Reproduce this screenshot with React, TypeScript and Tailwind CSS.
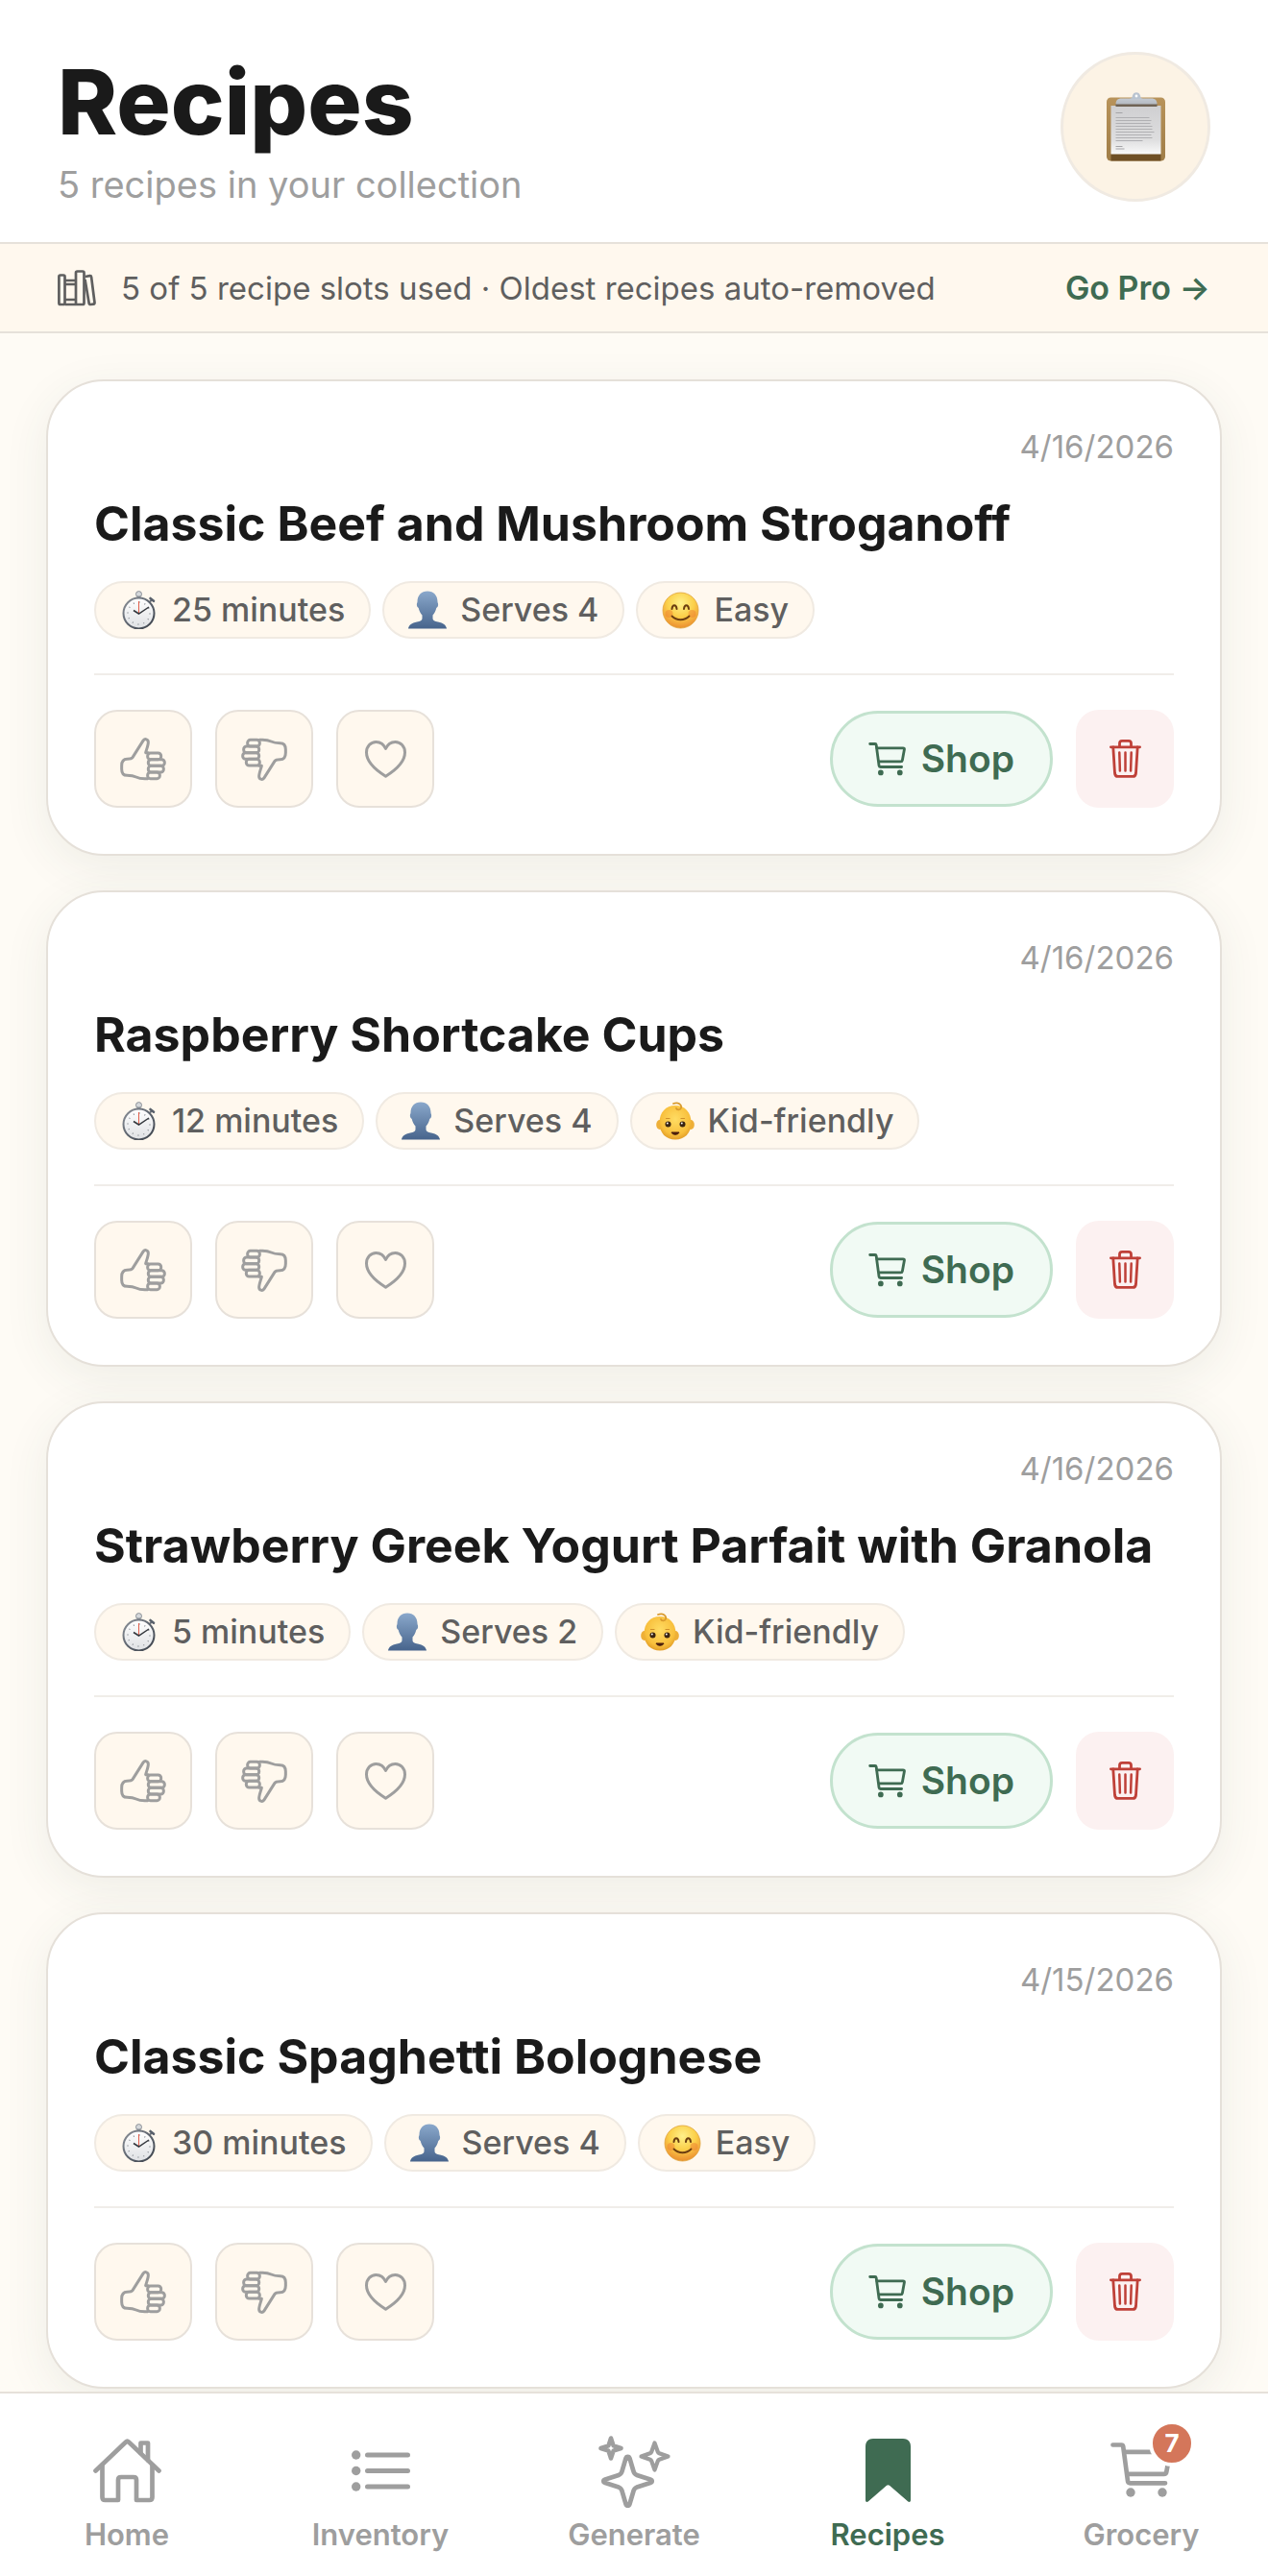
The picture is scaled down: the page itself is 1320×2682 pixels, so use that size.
import type { ReactNode } from 'react'

type Tag = { icon: 'timer' | 'person' | 'smile' | 'baby'; label: string }
type Recipe = { title: string; date: string; tags: Tag[] }

const RECIPES: Recipe[] = [
  {
    title: 'Classic Beef and Mushroom Stroganoff',
    date: '4/16/2026',
    tags: [
      { icon: 'timer', label: '25 minutes' },
      { icon: 'person', label: 'Serves 4' },
      { icon: 'smile', label: 'Easy' },
    ],
  },
  {
    title: 'Raspberry Shortcake Cups',
    date: '4/16/2026',
    tags: [
      { icon: 'timer', label: '12 minutes' },
      { icon: 'person', label: 'Serves 4' },
      { icon: 'baby', label: 'Kid-friendly' },
    ],
  },
  {
    title: 'Strawberry Greek Yogurt Parfait with Granola',
    date: '4/16/2026',
    tags: [
      { icon: 'timer', label: '5 minutes' },
      { icon: 'person', label: 'Serves 2' },
      { icon: 'baby', label: 'Kid-friendly' },
    ],
  },
  {
    title: 'Classic Spaghetti Bolognese',
    date: '4/15/2026',
    tags: [
      { icon: 'timer', label: '30 minutes' },
      { icon: 'person', label: 'Serves 4' },
      { icon: 'smile', label: 'Easy' },
    ],
  },
]

/* Gradients shared by the emoji drawings */
function EmojiDefs() {
  return (
    <svg className="absolute h-0 w-0" aria-hidden="true">
      <defs>
        <linearGradient id="steel" x1="0" y1="0" x2="1" y2="1">
          <stop offset="0" stopColor="#8d9299" />
          <stop offset="0.5" stopColor="#5d646e" />
          <stop offset="1" stopColor="#3c424b" />
        </linearGradient>
        <linearGradient id="dial" x1="0" y1="0" x2="0" y2="1">
          <stop offset="0" stopColor="#ffffff" />
          <stop offset="1" stopColor="#dfe1e4" />
        </linearGradient>
        <linearGradient id="bust" x1="0" y1="0" x2="0" y2="1">
          <stop offset="0" stopColor="#8aa8cb" />
          <stop offset="1" stopColor="#47648c" />
        </linearGradient>
        <radialGradient id="face" cx="0.5" cy="0.3" r="0.75">
          <stop offset="0" stopColor="#fff08a" />
          <stop offset="0.5" stopColor="#fbd04a" />
          <stop offset="0.85" stopColor="#ef9a35" />
          <stop offset="1" stopColor="#dd8a2a" />
        </radialGradient>
        <radialGradient id="babyface" cx="0.5" cy="0.4" r="0.65">
          <stop offset="0" stopColor="#ffdc63" />
          <stop offset="0.7" stopColor="#f8bf3c" />
          <stop offset="1" stopColor="#dc9422" />
        </radialGradient>
        <linearGradient id="board" x1="0" y1="0" x2="0" y2="1">
          <stop offset="0" stopColor="#b8935a" />
          <stop offset="1" stopColor="#a07d47" />
        </linearGradient>
        <linearGradient id="sheet" x1="0" y1="0" x2="0" y2="1">
          <stop offset="0" stopColor="#cfcfd1" />
          <stop offset="0.7" stopColor="#dededf" />
          <stop offset="1" stopColor="#fafafa" />
        </linearGradient>
        <linearGradient id="clip" x1="0" y1="0" x2="0" y2="1">
          <stop offset="0" stopColor="#c3cad3" />
          <stop offset="1" stopColor="#b4b9c0" />
        </linearGradient>
      </defs>
    </svg>
  )
}

function TimerEmoji() {
  return (
    <svg viewBox="0 0 40 40" className="size-10" aria-hidden="true">
      <circle cx="19.5" cy="3.6" r="3" fill="#d5d8db" stroke="#8a8f96" strokeWidth="1" />
      <rect x="17.6" y="5.5" width="3.8" height="4" fill="#8a8f96" />
      <path d="M31 11.500l2.500-2.500" stroke="#6a7079" strokeWidth="2" />
      <path d="M31.500 8l3.500 2.800" stroke="#59606b" strokeWidth="2.600" strokeLinecap="round" />
      <circle cx="19.5" cy="23.5" r="16" fill="url(#dial)" stroke="url(#steel)" strokeWidth="2" />
      <circle cx="19.500" cy="23.500" r="11.500" fill="none" stroke="#8b8f95" strokeWidth="1.400" strokeDasharray="1 5" />
      <path d="M19.500 24V11" stroke="#e2604d" strokeWidth="1" />
      <path d="M14 20.500l5.500 3.500 10.500-7" fill="none" stroke="#33373d" strokeWidth="1.500" />
    </svg>
  )
}

function PersonEmoji() {
  return (
    <svg viewBox="0 0 40 40" className="size-10" aria-hidden="true">
      <path
        d="M20 0.500c6.500 0 10.500 4.500 10.500 11 0 1 .8 1.500.6 3.500-.2 2-1.200 2.500-1.800 3-.8 3.500-2 5.500-3.800 7.500v3.500c0 2 2 2.800 5.500 3.600 5.500 1.200 8.200 3 9 7H0c.8-4 3.500-5.800 9-7 3.500-.8 5.500-1.600 5.500-3.600v-3.500c-1.800-2-3-4-3.800-7.500-.6-.5-1.600-1-1.800-3-.2-2 .6-2.500.6-3.500C9.500 5 13.500.5 20 .5z"
        fill="url(#bust)"
      />
    </svg>
  )
}

function SmileEmoji() {
  return (
    <svg viewBox="0 0 40 40" className="size-10" aria-hidden="true">
      <circle cx="19.500" cy="20.500" r="18.500" fill="url(#face)" stroke="#e0a33a" strokeWidth="0.800" />
      <circle cx="7.500" cy="24" r="4" fill="#ee7a2f" opacity="0.450" />
      <circle cx="31.500" cy="24" r="4" fill="#ee7a2f" opacity="0.450" />
      <path d="M10.500 19c.5-5 4.500-5 5 0M23 19c.5-5 4.500-5 5 0" fill="none" stroke="#6b3d10" strokeWidth="2" strokeLinecap="round" />
      <path d="M10.500 26.500c5 5 13 5 18 0" fill="none" stroke="#6b3d10" strokeWidth="1.800" strokeLinecap="round" />
    </svg>
  )
}

function BabyEmoji() {
  return (
    <svg viewBox="0 0 40 40" className="size-10" aria-hidden="true">
      <ellipse cx="3.800" cy="24" rx="3.600" ry="5" fill="#eeaf38" />
      <ellipse cx="36.200" cy="24" rx="3.600" ry="5" fill="#eeaf38" />
      <path d="M20 4C10 4 3.500 11 3.500 22c0 11 7 17.500 16.500 17.500S36.500 33 36.500 22C36.500 11 30 4 20 4z" fill="url(#babyface)" />
      <path d="M18 2c5-2 9 1 8 4.500-.8 2.500-4.500 2.500-5 .3" fill="none" stroke="#d99a2c" strokeWidth="1.800" strokeLinecap="round" />
      <circle cx="12.500" cy="23.500" r="3" fill="#3a2410" />
      <circle cx="27.500" cy="23.500" r="3" fill="#3a2410" />
      <circle cx="11.800" cy="22.500" r="0.900" fill="#fff" />
      <circle cx="26.800" cy="22.500" r="0.900" fill="#fff" />
      <path d="M10.500 17.500h3.500M26 17.500h3.500" stroke="#cf8f28" strokeWidth="1.200" strokeLinecap="round" />
      <path d="M16 32h8c-1 3-7 3-8 0z" fill="#4a1d0c" stroke="#4a1d0c" strokeWidth="1" strokeLinejoin="round" />
    </svg>
  )
}

const EMOJI: Record<Tag['icon'], () => ReactNode> = {
  timer: TimerEmoji,
  person: PersonEmoji,
  smile: SmileEmoji,
  baby: BabyEmoji,
}

function ClipboardEmoji() {
  return (
    <svg viewBox="0 0 61 72" className="h-[72px] w-[61px]" aria-hidden="true">
      <rect x="0" y="5.500" width="61" height="66" rx="4.500" fill="url(#board)" />
      <path d="M4.500 64h52v7.500h-52z" fill="#6f5026" />
      <path d="M4.500 14h52v50.500h-52z" fill="url(#sheet)" />
      <path d="M9.500 13.500h43" stroke="#6f6355" strokeWidth="3" />
      <path d="M9.500 12.500c0-4 2-6 6-6h31c4 0 6 2 6 6z" fill="url(#clip)" />
      <path d="M23 7c3 0 3.500-1.500 4-3.500.8-4.500 7.200-4.500 8 0C35.500 5.500 36 7 39 7z" fill="#b9c3d0" />
      <circle cx="31" cy="4" r="1.400" fill="#fff" />
      <path d="M9.500 21.500h7M9.500 59h9M9.500 56.500h7" stroke="#a4a4a7" strokeWidth="1" />
      <path
        d="M9.500 26.500h35M9.500 29.500h37M9.500 32.500h36M9.500 35.500h38M9.500 38.500h38M9.500 41.500h40M9.500 44.500h37M9.500 47.500h38M9.500 50.500h28"
        stroke="#b0b0b3"
        strokeWidth="1.200"
      />
    </svg>
  )
}

function BooksIcon() {
  return (
    <svg viewBox="0 0 40 38" className="h-[38px] w-10" fill="none" stroke="currentColor" strokeWidth="2.700" strokeLinejoin="round" aria-hidden="true">
      <rect x="1.400" y="5.500" width="6.100" height="30.500" rx="1.500" />
      <path d="M7.500 11h11.500M7.500 15h11.500M7.500 31h11.500M8 36h11" />
      <rect x="19" y="1.500" width="8.500" height="34.500" rx="1.500" />
      <path d="M28.800 7l4.700-.8c1-.1 1.500.3 1.600 1.200L38.500 34c.1.900-.3 1.500-1.200 1.600l-3 .4c-.9.1-1.500-.3-1.600-1.200L28.500 10" />
    </svg>
  )
}

function ThumbIcon({ down = false }: { down?: boolean }) {
  return (
    <svg
      viewBox="0 0 144 135"
      className={down ? 'h-[45px] w-12 rotate-180' : 'h-[45px] w-12'}
      fill="none"
      stroke="currentColor"
      strokeWidth="9"
      strokeLinejoin="round"
      strokeLinecap="round"
      aria-hidden="true"
    >
      <path d="M86 128c-14 1-26 0-36-5-8-4-18-5-28-5C10 118 5 110 5 98V88c0-15 5-21 17-21 11 0 14-1 17-5L73 8c5-6 15-3 15 6 0 10-6 24-8 33h8" />
      <rect x="86" y="48" width="42" height="20" rx="9" />
      <rect x="88" y="68" width="51" height="20" rx="9" />
      <rect x="88" y="88" width="48" height="20" rx="9" />
      <rect x="86" y="108" width="38" height="20" rx="9" />
    </svg>
  )
}

function HeartIcon() {
  return (
    <svg viewBox="0 0 43 39" className="h-[39px] w-[43px]" fill="none" stroke="currentColor" strokeWidth="3" strokeLinejoin="round" aria-hidden="true">
      <path d="M21.500 37.200C10 30 1.500 22 1.500 12.500 1.500 6 6 1.500 11.500 1.500c4.500 0 8 2.500 10 7 2-4.500 5.500-7 10-7 5.500 0 10 4.500 10 11C41.500 22 33 30 21.500 37.200z" />
    </svg>
  )
}

function CartIcon({ className }: { className: string }) {
  return (
    <svg viewBox="0 0 64 58" className={className} fill="none" stroke="currentColor" strokeWidth="4.700" strokeLinejoin="round" strokeLinecap="round" aria-hidden="true">
      <path d="M2.500 2.500h9c1 0 1.500.5 1.700 1.500L18 40c.2 1.500 1 2.300 2.500 2.300H57" />
      <path d="M14.500 9.800h45c1.800 0 2.500.8 2.200 2.400l-3.400 18.300c-.3 1.700-1 2.400-2.800 2.400h-37" />
      <circle cx="21" cy="52" r="4.700" fill="currentColor" stroke="none" />
      <circle cx="54" cy="52" r="4.700" fill="currentColor" stroke="none" />
    </svg>
  )
}

function TrashIcon() {
  return (
    <svg viewBox="0 0 33 40" className="h-10 w-[33px]" fill="none" stroke="currentColor" strokeWidth="2.800" strokeLinejoin="round" strokeLinecap="round" aria-hidden="true">
      <path d="M1.400 7.800h30.200M10.500 7.500V4c0-1.700.9-2.600 2.600-2.600h6.800c1.700 0 2.600.9 2.600 2.600v3.500" />
      <path d="M3.800 8l1.700 27c.2 2.200 1.200 3.400 3.200 3.400h15.600c2 0 3-1.200 3.200-3.400L29.200 8" />
      <path d="M10.300 13.500l.6 19M16.500 13.500v19M22.700 13.500l-.6 19" strokeWidth="2.500" />
    </svg>
  )
}

function HomeIcon() {
  return (
    <svg viewBox="0 0 71 67" className="h-[67px] w-[71px]" fill="none" stroke="currentColor" strokeWidth="4.700" strokeLinejoin="round" strokeLinecap="round" aria-hidden="true">
      <path d="M2.500 33.500L34 3.500c1-1 2-1 3 0l31.500 30" />
      <path d="M49.500 15V4.500H57V22.500" />
      <path d="M9.500 28v33c0 2 1 3 3 3h13.500V43c0-2 1-3 3-3h13c2 0 3 1 3 3v21H58.500c2 0 3-1 3-3V28" />
    </svg>
  )
}

function ListIcon() {
  return (
    <svg viewBox="0 0 61 43" className="h-[43px] w-[61px]" fill="none" stroke="currentColor" strokeWidth="5" strokeLinecap="round" aria-hidden="true">
      <path d="M16.500 5h42M16.500 21.500h42M16.500 38h42" />
      <g fill="currentColor" stroke="none">
        <circle cx="4.700" cy="5" r="4.700" />
        <circle cx="4.700" cy="21.500" r="4.700" />
        <circle cx="4.700" cy="38" r="4.700" />
      </g>
    </svg>
  )
}

function SparklesIcon() {
  return (
    <svg viewBox="0 0 80 82" className="h-[82px] w-20 shrink-0" fill="none" stroke="currentColor" strokeWidth="4.700" strokeLinejoin="round" aria-hidden="true">
      <path d="M31.500 28.500c.7-2.300 3.300-2.300 4 0L39.500 42c.5 2 1.500 3 3.500 4l14 4.500c2.300.8 2.300 2.700 0 3.500L43 58.500c-2 1-3 2-3.500 4L35.500 76c-.7 2.300-3.300 2.300-4 0l-4-13.500c-.5-2-1.500-3-3.500-4L10 54c-2.300-.8-2.300-2.700 0-3.500L24 46c2-1 3-2 3.500-4z" />
      <path d="M61.500 12.500l3.300 9.200c.3.800.7 1.200 1.500 1.500l9.200 3.300-9.200 3.300c-.8.3-1.200.7-1.500 1.500l-3.300 9.200-3.300-9.200c-.3-.8-.7-1.200-1.500-1.500l-9.200-3.300 9.200-3.300c.8-.3 1.200-.7 1.500-1.500z" strokeWidth="4.200" />
      <path d="M16 7.500l2.600 7.900 7.900 2.600-7.900 2.600L16 28.500l-2.600-7.900L5.500 18l7.900-2.600z" strokeWidth="4.500" />
    </svg>
  )
}

function BookmarkIcon() {
  return (
    <svg viewBox="0 0 47 66" className="h-[66px] w-[47px]" fill="currentColor" aria-hidden="true">
      <path d="M8 0h31c5 0 8 3 8 8v56c0 2-1.500 2.600-3 1.300L25 48.800c-1-.9-2-.9-3 0L3 65.300C1.500 66.600 0 66 0 64V8c0-5 3-8 8-8z" />
    </svg>
  )
}

function RecipeCard({ recipe }: { recipe: Recipe }) {
  return (
    <article className="rounded-[60px] border-2 border-[#e5e0d9] bg-white p-12 shadow-[0_12px_48px_rgba(50,80,60,0.08)]">
      <div className="text-right text-[33px] leading-10 text-[#9e9e9e]">{recipe.date}</div>
      <h2 className="mt-6 text-[50px] leading-[72px] font-bold text-[#1a1a1a]">{recipe.title}</h2>
      <div className="mt-6 flex flex-wrap gap-3">
        {recipe.tags.map((tag) => {
          const Emoji = EMOJI[tag.icon]
          return (
            <span
              key={tag.label}
              className="flex items-center gap-[14px] rounded-full border-2 border-[#f0eae2] bg-[#fff8ee] px-[25px] py-2 text-[34px] leading-10 font-medium text-[#5f5f5f]"
            >
              <Emoji />
              {tag.label}
            </span>
          )
        })}
      </div>
      <div className="mt-9 flex items-center justify-between border-t-2 border-[#f0ede9] pt-9">
        <div className="flex gap-6 text-[#9e9e9e]">
          <button type="button" aria-label="Like" className="flex size-[102px] items-center justify-center rounded-3xl border-2 border-[#e7e1da] bg-[#fff8ee]">
            <ThumbIcon />
          </button>
          <button type="button" aria-label="Dislike" className="flex size-[102px] items-center justify-center rounded-3xl border-2 border-[#e7e1da] bg-[#fff8ee]">
            <ThumbIcon down />
          </button>
          <button type="button" aria-label="Favorite" className="flex size-[102px] items-center justify-center rounded-3xl border-2 border-[#e7e1da] bg-[#fff8ee]">
            <HeartIcon />
          </button>
        </div>
        <div className="flex items-center gap-6">
          <button
            type="button"
            className="flex h-[100px] items-center gap-4 rounded-full border-3 border-[#c3e2ce] bg-[#f1faf4] px-[37px] text-[39px] font-semibold text-[#3f6b52]"
          >
            <CartIcon className="h-[35px] w-[39px]" />
            Shop
          </button>
          <button type="button" aria-label="Delete" className="flex size-[102px] items-center justify-center rounded-3xl bg-[#fcf1f1] text-[#bf4038]">
            <TrashIcon />
          </button>
        </div>
      </div>
    </article>
  )
}

function NavItem({ label, active = false, children }: { label: string; active?: boolean; children: ReactNode }) {
  return (
    <a
      href="#"
      aria-current={active ? 'page' : undefined}
      className={`flex flex-1 flex-col items-center gap-3 text-[31px] leading-[38px] font-semibold ${active ? 'text-[#3f6b52]' : 'text-[#9e9e9e]'}`}
    >
      <span className="relative flex h-[72px] items-center justify-center">{children}</span>
      {label}
    </a>
  )
}

export default function App() {
  return (
    <div className="flex h-screen flex-col bg-[#fefbf5] font-['Inter',sans-serif]">
      <EmojiDefs />

      <header className="flex shrink-0 items-center justify-between border-b-2 border-[#e6e1da] bg-white px-[60px] pt-12 pb-9">
        <div>
          <h1 className="text-[94px] leading-[116px] font-extrabold text-[#1a1a1a]">Recipes</h1>
          <p className="mt-1 text-[38px] leading-[48px] text-[#9e9e9e]">5 recipes in your collection</p>
        </div>
        <button type="button" aria-label="Collections" className="flex size-[156px] items-center justify-center rounded-full border-3 border-[#f0eae2] bg-[#fcf3e5]">
          <ClipboardEmoji />
        </button>
      </header>

      {/* Free plan notice */}
      <div className="flex h-[93px] shrink-0 items-center justify-between border-b-2 border-[#e6e1da] bg-[#fff8ee] px-[60px] leading-10">
        <div className="flex items-center gap-[26px] text-[33px] text-[#5f5f5f]">
          <BooksIcon />
          5 of 5 recipe slots used · Oldest recipes auto-removed
        </div>
        <a href="#" className="text-[34px] font-semibold text-[#3f6b52]">
          Go Pro →
        </a>
      </div>

      <main className="flex min-h-0 flex-1 flex-col gap-9 overflow-y-auto px-12 pt-12 [scrollbar-width:none]">
        {RECIPES.map((recipe) => (
          <RecipeCard key={recipe.title} recipe={recipe} />
        ))}
      </main>

      <nav className="flex shrink-0 border-t-2 border-[#e6e1da] bg-white pt-11 pb-6">
        <NavItem label="Home">
          <HomeIcon />
        </NavItem>
        <NavItem label="Inventory">
          <ListIcon />
        </NavItem>
        <NavItem label="Generate">
          <SparklesIcon />
        </NavItem>
        <NavItem label="Recipes" active>
          <BookmarkIcon />
        </NavItem>
        <NavItem label="Grocery">
          <CartIcon className="h-[58px] w-16" />
          <span className="absolute -top-4 -right-6 flex size-12 items-center justify-center rounded-full border-4 border-white bg-[#d4765a] text-[26px] leading-none font-bold text-white">
            7
          </span>
        </NavItem>
      </nav>
    </div>
  )
}
